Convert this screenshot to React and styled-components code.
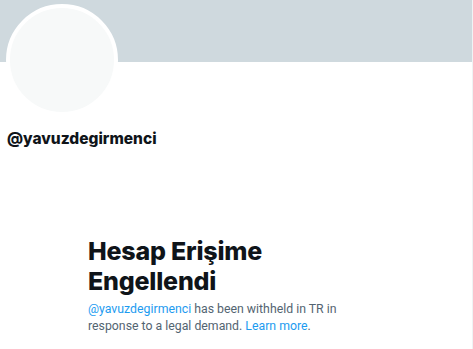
import styled, { createGlobalStyle } from "styled-components";

const GlobalStyle = createGlobalStyle`
    html, body {
        margin: 0;
        padding: 0;
        background: #ffffff;
    }
    body {
        font-family: Inter, "Noto Sans", Roboto, sans-serif;
        color: #0f1419;
    }
`;

const Page = styled.div`
    width: 472px;
    height: 349px;
    border-right: 1px solid #eff3f4;
    overflow: hidden;
`;

const Banner = styled.div`
    height: 62px;
    background: #cfd9de;
`;

const Avatar = styled.div`
    width: 104px;
    height: 104px;
    margin: -58px 0 0 6px;
    border: 4px solid #ffffff;
    border-radius: 50%;
    background: #f7f9f9;
`;

const Handle = styled.div`
    margin: 13px 0 0 7px;
    font-size: 15.5px;
    font-weight: 800;
    line-height: 20px;
    color: #0f1419;
`;

const Empty = styled.div`
    width: 268px;
    margin: 87px 0 0 88px;
    .title {
        margin: 0;
        font-size: 25px;
        font-weight: 800;
        line-height: 30px;
        letter-spacing: -0.2px;
        color: #0f1419;
    }
    .subtitle {
        margin-top: 5px;
        font-family: Roboto, "Liberation Sans", sans-serif;
        font-size: 12.3px;
        line-height: 17px;
        color: #536471;
    }
    a {
        color: #1d9bf0;
        text-decoration: none;
    }
`;

function App() {
    return (
        <Page>
            <GlobalStyle />
            <Banner />
            <Avatar />
            <Handle>@yavuzdegirmenci</Handle>
            <Empty>
                <h2 className="title">Hesap Erişime Engellendi</h2>
                <div className="subtitle">
                    <a href="#">@yavuzdegirmenci</a> has been withheld in TR in response to a legal demand. <a href="#">Learn more</a>.
                </div>
            </Empty>
        </Page>
    );
}

export default App;
